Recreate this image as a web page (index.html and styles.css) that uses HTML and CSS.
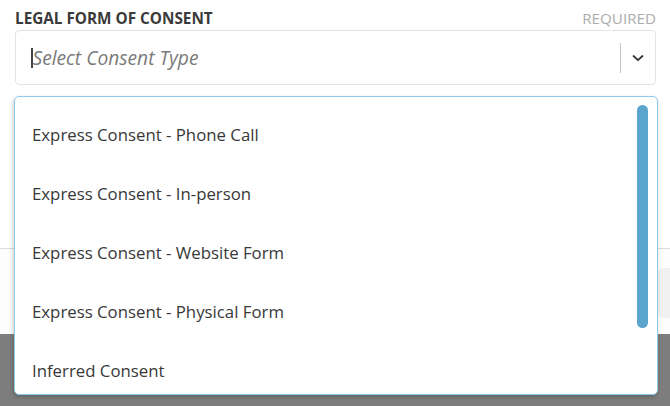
FILE: index.html
```html
<!DOCTYPE html>
<html lang="en">
  <head>
    <meta charset="UTF-8" />
    <meta name="viewport" content="width=device-width, initial-scale=1.0" />
    <title>Legal Form of Consent</title>
    <link rel="stylesheet" href="styles.css">
  </head>
  <body>
    <div class="page">
      <!-- field -->
      <div class="field">
        <div class="labelRow">
          <span class="label">LEGAL FORM OF CONSENT</span>
          <span class="required">REQUIRED</span>
        </div>
        <div class="select">
          <span class="caret"></span>
          <span class="placeholder">Select Consent Type</span>
          <span class="sep"></span>
          <span class="arrow">
            <svg width="14" height="14" viewBox="0 0 14 14">
              <path d="M2.5 5 L7 9.2 L11.5 5" fill="none" stroke="#333" stroke-width="1.8" stroke-linecap="round" stroke-linejoin="round" />
            </svg>
          </span>
        </div>
      </div>

      <!-- phần phía sau menu -->
      <div class="behind">
        <div class="behindRow">
          <div class="ghostBox"></div>
        </div>
        <div class="overlay"></div>
      </div>

      <!-- menu thả xuống -->
      <div class="menu">
        <ul class="options">
          <li>Express Consent - Phone Call</li>
          <li>Express Consent - In-person</li>
          <li>Express Consent - Website Form</li>
          <li>Express Consent - Physical Form</li>
          <li>Inferred Consent</li>
        </ul>
        <div class="scrollbar"></div>
      </div>
    </div>
  </body>
</html>
```

FILE: styles.css
```css
* {
  margin: 0;
  padding: 0;
  box-sizing: border-box;
}
body {
  font-family: "Open Sans", "Liberation Sans", sans-serif;
  background: #fff;
  overflow: hidden;
}
.page {
  position: relative;
  width: 670px;
  height: 406px;
  display: flex;
  flex-direction: column;
}
.field {
  padding: 8px 14px 0 15px;
}
.labelRow {
  display: flex;
  justify-content: space-between;
  align-items: baseline;
  height: 22px;
  line-height: 20px;
}
.label {
  font-size: 15.3px;
  font-weight: 700;
  color: #3a3a3a;
}
.required {
  font-size: 15.2px;
  color: #adadad;
}
.select {
  height: 55px;
  border: 1px solid #e3e3e3;
  border-radius: 4px;
  display: flex;
  align-items: center;
  padding-left: 15px;
}
.caret {
  width: 1.5px;
  height: 20px;
  background: #444;
}
.placeholder {
  flex: 1;
  font-size: 19.2px;
  font-style: italic;
  color: #7a7a7a;
}
.sep {
  width: 1px;
  height: 30px;
  background: #c4c4c4;
}
.arrow {
  width: 34px;
  display: flex;
  justify-content: center;
}
.behind {
  flex: 1;
  display: flex;
  flex-direction: column;
  margin-top: 163px;
}
.behindRow {
  height: 86px;
  border-top: 1px solid #dcdcdc;
  background: #fdfdfd;
  display: flex;
  justify-content: flex-end;
  padding-top: 19px;
}
.ghostBox {
  width: 20px;
  height: 50px;
  background: #f1f1f1;
  border-radius: 5px;
  margin-right: -8px;
}
.overlay {
  flex: 1;
  background: #7d7d7d;
}
.menu {
  position: absolute;
  left: 14px;
  top: 96px;
  width: 644px;
  height: 299px;
  background: #fff;
  border: 1.5px solid #8dcaee;
  border-radius: 5px;
  box-shadow: -1px 2px 4px rgba(0, 0, 0, 0.2);
  overflow: hidden;
}
.options {
  list-style: none;
  padding-top: 12px;
}
.options li {
  height: 59px;
  line-height: 52px;
  padding-left: 17px;
  font-size: 16.8px;
  color: #383838;
}
.scrollbar {
  position: absolute;
  right: 9px;
  top: 8px;
  width: 11px;
  height: 223px;
  background: #5aa4ce;
  border-radius: 6px;
}
```
